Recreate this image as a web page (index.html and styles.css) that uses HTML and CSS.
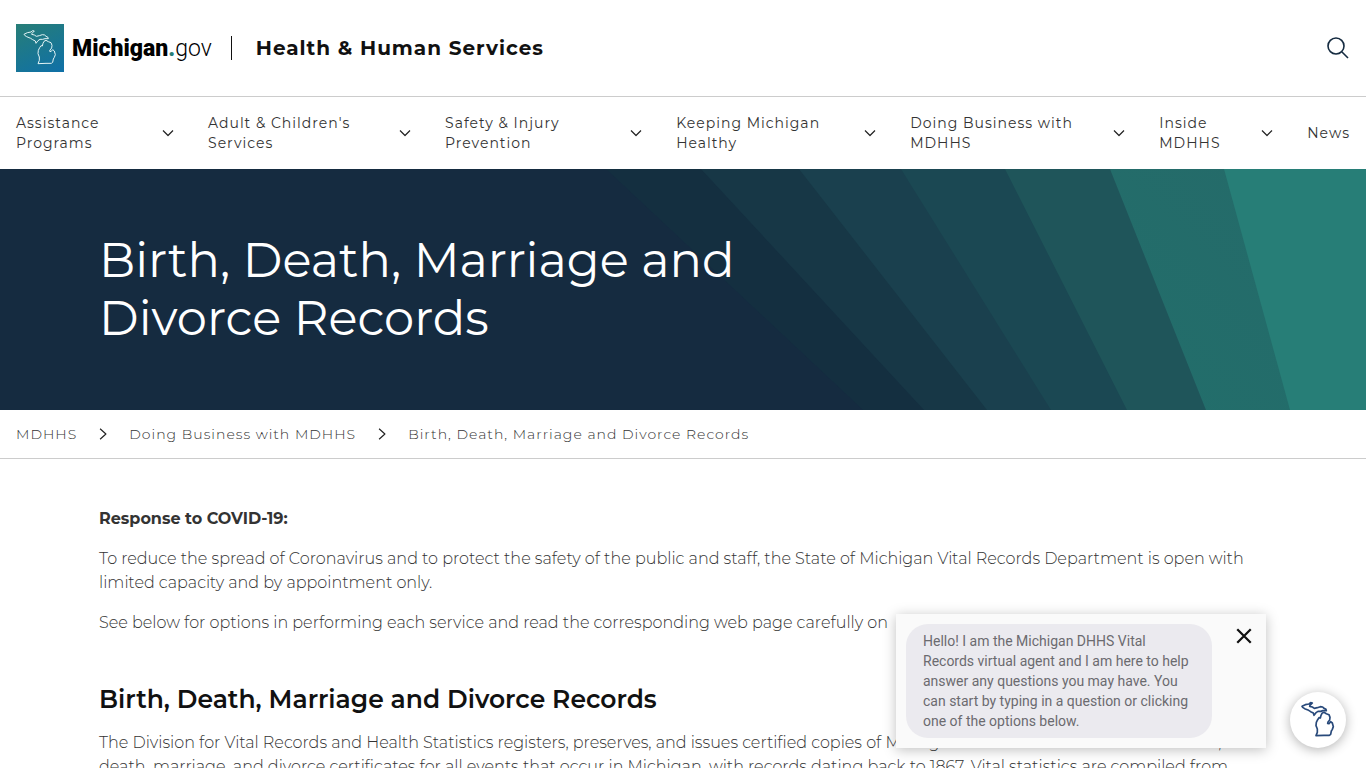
FILE: index.html
```html
<!DOCTYPE html>
<html lang="en">
<head>
<meta charset="utf-8">
<meta name="viewport" content="width=device-width, initial-scale=1">
<title>Birth, Death, Marriage and Divorce Records</title>
<link rel="stylesheet" href="styles.css">
</head>
<body>
<svg class="defs" width="0" height="0" aria-hidden="true">
  <symbol id="michigan" viewBox="0 0 144 144">
    <path d="M24 31 L34 26 L45 24 L50 20 L55 21 L48 28 L47 31 L55 33 L61 37 L70 35 L79 32 L86 33 L90 37 L96 40 L97 44 L87 44 L80 46 L72 46 L66 50 L60 58 L58 51 L50 47 L44 43 L32 38 L26 34 Z"/>
    <path d="M84 52 L90 49 L97 53 L105 56 L108 64 L107 72 L102 78 L101 82 L105 83 L110 77 L115 81 L118 92 L115 100 L112 105 L110 115 L106 118 L90 118 L66 119 L70 109 L70 99 L66 89 L67 79 L71 71 L75 65 L79 66 L81 58 Z"/>
  </symbol>
  <symbol id="down" viewBox="0 0 12 12"><path d="M1 3.500 6 8.500 11 3.500"/></symbol>
  <symbol id="right" viewBox="0 0 12 12"><path d="M3.500 1.500 8.500 6 3.500 10.500"/></symbol>
</svg>

<header class="header">
  <a class="logo" href="#" aria-label="Michigan.gov">
    <svg class="logo-mark" aria-hidden="true"><use href="#michigan"/></svg>
    <span class="logo-text"><b>Michigan<i>.</i></b><span>gov</span></span>
  </a>
  <a class="agency" href="#">Health &amp; Human Services</a>
  <button class="search" aria-label="Search">
    <svg viewBox="0 0 24 24" aria-hidden="true"><circle cx="10" cy="10" r="8"/><path d="M16 16 22 22"/></svg>
  </button>
</header>

<nav class="nav" aria-label="Main">
  <button class="nav-item"><span>Assistance Programs</span><svg aria-hidden="true"><use href="#down"/></svg></button>
  <button class="nav-item"><span>Adult &amp; Children's Services</span><svg aria-hidden="true"><use href="#down"/></svg></button>
  <button class="nav-item"><span>Safety &amp; Injury Prevention</span><svg aria-hidden="true"><use href="#down"/></svg></button>
  <button class="nav-item"><span>Keeping Michigan Healthy</span><svg aria-hidden="true"><use href="#down"/></svg></button>
  <button class="nav-item"><span>Doing Business with MDHHS</span><svg aria-hidden="true"><use href="#down"/></svg></button>
  <button class="nav-item"><span>Inside MDHHS</span><svg aria-hidden="true"><use href="#down"/></svg></button>
  <a class="nav-item" href="#">News</a>
</nav>

<section class="hero">
  <svg class="hero-rays" viewBox="0 0 1366 241" preserveAspectRatio="none" aria-hidden="true">
    <defs>
      <linearGradient id="ray" x1="0" y1="1" x2="1" y2="0"><stop offset="0" stop-color="#226e6b"/><stop offset="1" stop-color="#256a69"/></linearGradient>
    </defs>
    <path fill="#142f40" d="M606 0H1366V241H863Z"/>
    <path fill="#173746" d="M701 0H1366V241H924Z"/>
    <path fill="#1a404e" d="M799 0H1366V241H987Z"/>
    <path fill="#1b4853" d="M901 0H1366V241H1051Z"/>
    <path fill="#1f555a" d="M1005 0H1366V241H1127Z"/>
    <path fill="url(#ray)" d="M1110 0H1366V241H1206Z"/>
    <path fill="#277e77" d="M1224 0H1366V241H1290Z"/>
  </svg>
  <h1>Birth, Death, Marriage and Divorce Records</h1>
</section>

<nav class="crumbs" aria-label="Breadcrumb">
  <a href="#">MDHHS</a>
  <svg aria-hidden="true"><use href="#right"/></svg>
  <a href="#">Doing Business with MDHHS</a>
  <svg aria-hidden="true"><use href="#right"/></svg>
  <span>Birth, Death, Marriage and Divorce Records</span>
</nav>

<main class="content">
  <p><strong>Response to COVID-19:</strong></p>
  <p>To reduce the spread of Coronavirus and to protect the safety of the public and staff, the State of Michigan Vital Records Department is open with limited capacity and by appointment only.</p>
  <p>See below for options in performing each service and read the corresponding web page carefully on</p>
  <h2>Birth, Death, Marriage and Divorce Records</h2>
  <p>The Division for Vital Records and Health Statistics registers, preserves, and issues certified copies of Michigan vital records. These include birth, death, marriage, and divorce certificates for all events that occur in Michigan, with records dating back to 1867. Vital statistics are compiled from</p>
</main>

<aside class="chat">
  <p>Hello! I am the Michigan DHHS Vital Records virtual agent and I am here to help answer any questions you may have. You can start by typing in a question or clicking one of the options below.</p>
  <button class="chat-close" aria-label="Close">
    <svg viewBox="0 0 16 16" aria-hidden="true"><path d="M2 2 14 14M14 2 2 14"/></svg>
  </button>
</aside>
<button class="chat-open" aria-label="Open chat"><svg aria-hidden="true"><use href="#michigan"/></svg></button>
</body>
</html>
```
FILE: styles.css
```css
* {
  box-sizing: border-box;
}

body {
  margin: 0;
  height: 100vh;
  overflow: hidden;
  background: #fff;
  color: #333;
  font-family: Montserrat, Inter, "Liberation Sans", sans-serif;
  font-size: 16px;
  line-height: 24px;
}

button {
  padding: 0;
  border: 0;
  background: none;
  color: inherit;
  font: inherit;
  cursor: pointer;
}

a {
  color: inherit;
  text-decoration: none;
}

svg {
  fill: none;
  stroke-linejoin: round;
}

.defs {
  position: absolute;
}

.header {
  display: flex;
  align-items: center;
  padding: 24px 16px;
  border-bottom: 1px solid #ccc;
}

.logo {
  display: flex;
  align-items: center;
  gap: 8px;
}

.logo-mark {
  width: 48px;
  height: 48px;
  background: linear-gradient(155deg, #277e77, #0f70a8);
  stroke: #e4f4f6;
  stroke-width: 3;
}

.logo-text {
  padding-top: 2px;
  color: #000;
  font-family: Roboto, sans-serif;
  font-size: 23px;
}

.logo-text b {
  font-weight: 900;
}

.logo-text i {
  color: #277e77;
  font-style: normal;
}

.logo-text span {
  font-weight: 300;
}

.agency {
  margin-left: 19px;
  padding-left: 24px;
  border-left: 1px solid #111;
  color: #111;
  font-size: 20px;
  font-weight: 700;
  letter-spacing: 1px;
}

.search {
  display: flex;
  margin-left: auto;
}

.search svg {
  width: 24px;
  height: 24px;
  stroke: #152b40;
  stroke-width: 1.600;
}

.nav {
  display: grid;
  grid-template-columns: 192fr 237fr 231fr 234fr 249fr 148fr auto;
  align-items: center;
  padding: 16px;
  font-size: 14px;
  line-height: 20px;
  letter-spacing: 1px;
}

.nav-item {
  display: flex;
  align-items: center;
  justify-content: space-between;
  gap: 8px;
  text-align: left;
  letter-spacing: 1px;
}

button.nav-item {
  padding-right: 34px;
}

.nav svg,
.crumbs svg {
  flex: none;
  width: 12px;
  height: 12px;
  stroke: #222;
  stroke-width: 1.200;
}

.crumbs svg {
  width: 14px;
  height: 14px;
  stroke-width: 1;
}

.hero {
  position: relative;
  padding: 62px 99px 63px;
  background: #152b40;
}

.hero-rays {
  position: absolute;
  inset: 0;
  width: 100%;
  height: 100%;
}

.hero h1 {
  position: relative;
  max-width: 680px;
  margin: 0;
  color: #fff;
  font-size: 48px;
  font-weight: 400;
  line-height: 58px;
}

.crumbs {
  display: flex;
  align-items: center;
  padding: 12px 16px;
  border-bottom: 1px solid #ccc;
  font-size: 14px;
  font-weight: 300;
  letter-spacing: 1px;
  gap: 19px;
}

.content {
  padding: 48px 99px 0;
  font-weight: 300;
}

.content p {
  margin: 0 0 16px;
}

.content strong {
  font-weight: 700;
}

.content h2 {
  margin: 48px 0 16px;
  color: #111;
  font-size: 25px;
  font-weight: 600;
  line-height: 32px;
}

.chat {
  position: fixed;
  right: 100px;
  bottom: 20px;
  display: flex;
  align-items: flex-start;
  justify-content: space-between;
  width: 370px;
  padding: 10px;
  background: #fafafa;
  box-shadow: 0 2px 12px rgba(0, 0, 0, 0.25);
  font-family: Roboto, sans-serif;
}

.chat p {
  width: 306px;
  margin: 0;
  padding: 7px 17px;
  border-radius: 22px;
  background: #ebeaef;
  color: #6b6b6f;
  font-size: 14px;
  line-height: 20px;
}

.chat-close {
  display: flex;
  padding: 3px;
}

.chat-close svg {
  width: 18px;
  height: 18px;
  stroke: #111;
  stroke-width: 2;
}

.chat-open {
  position: fixed;
  right: 20px;
  bottom: 20px;
  width: 56px;
  height: 56px;
  border-radius: 50%;
  background: #fff;
  box-shadow: 0 2px 12px rgba(0, 0, 0, 0.3);
}

.chat-open svg {
  display: block;
  width: 48px;
  height: 48px;
  margin: 0 auto;
  stroke: #28497a;
  stroke-width: 5;
}
```
